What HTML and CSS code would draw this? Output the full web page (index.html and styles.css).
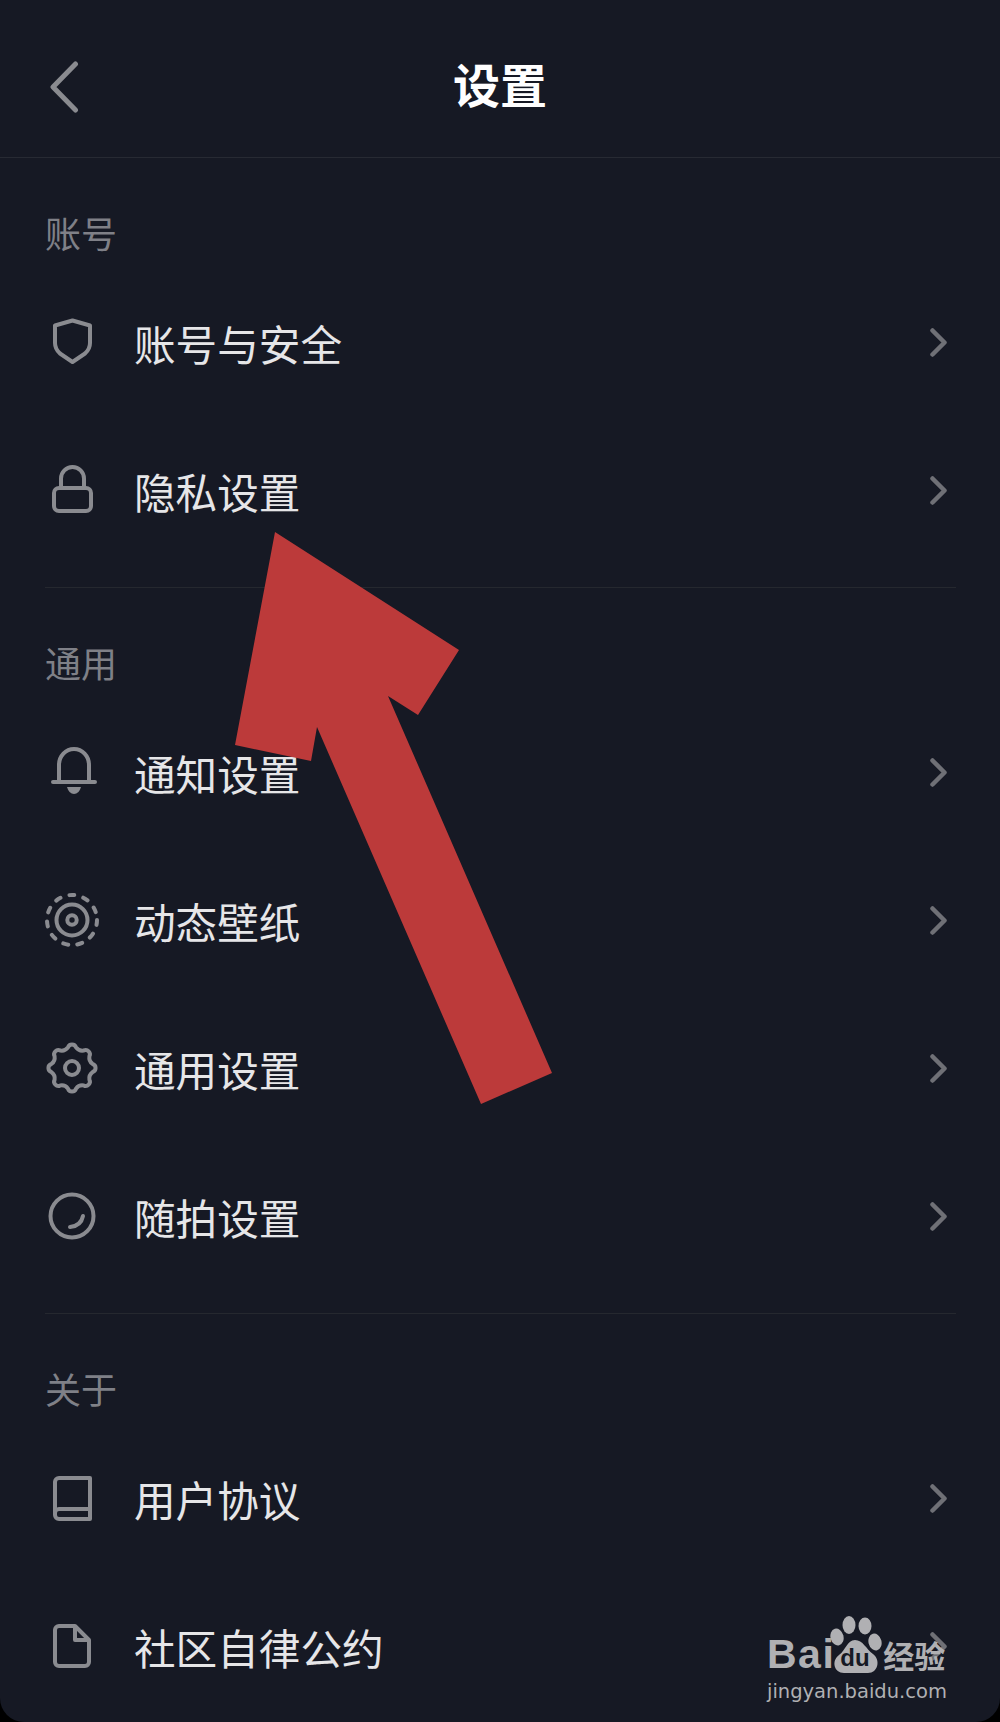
FILE: index.html
```html
<!DOCTYPE html>
<html lang="zh-CN">
<head>
<meta charset="UTF-8">
<meta name="viewport" content="width=device-width, initial-scale=1.0">
<title>设置</title>
<link rel="stylesheet" href="styles.css">
</head>
<body>

<div class="screen">

  <!-- 顶部标题栏 -->
  <header class="topbar">
    <svg class="back" viewBox="0 0 34 58"><path d="M30.500 7 8 30 30.500 53"/></svg>
    <h1 class="title">设置</h1>
    <span></span>
  </header>

  <!-- 账号 -->
  <section class="group">
    <h2 class="group-name">账号</h2>
    <div class="row">
      <svg class="icon" viewBox="0 0 54 54"><path d="M27.500 5.500 45 10.500V28q0 6-5 10.500L27.500 47 15 38.500Q10 34 10 28V10.500Z"/></svg>
      <span class="label">账号与安全</span>
      <svg class="more" viewBox="0 0 17 29"><path d="M2.500 2.500 14.500 14.500 2.500 26.500"/></svg>
    </div>
    <div class="row">
      <svg class="icon" viewBox="0 0 54 54"><rect x="9" y="25" width="37" height="23" rx="5"/><path d="M16 25V15.500a11.500 11.500 0 0 1 23 0V25"/></svg>
      <span class="label">隐私设置</span>
      <svg class="more" viewBox="0 0 17 29"><path d="M2.500 2.500 14.500 14.500 2.500 26.500"/></svg>
    </div>
  </section>

  <!-- 通用 -->
  <section class="group">
    <h2 class="group-name">通用</h2>
    <div class="row">
      <svg class="icon" viewBox="0 0 54 54"><path d="M14 37V20a15 16 0 0 1 30 0V37M8 37H50"/><path class="solid" d="M22 42H36Q34 49 29 49 24 49 22 42Z"/></svg>
      <span class="label">通知设置</span>
      <svg class="more" viewBox="0 0 17 29"><path d="M2.500 2.500 14.500 14.500 2.500 26.500"/></svg>
    </div>
    <div class="row">
      <svg class="icon" viewBox="0 0 54 54"><circle class="dashes" cx="27" cy="27" r="25"/><circle cx="27" cy="27" r="15.500"/><circle cx="27" cy="27" r="4.700"/></svg>
      <span class="label">动态壁纸</span>
      <svg class="more" viewBox="0 0 17 29"><path d="M2.500 2.500 14.500 14.500 2.500 26.500"/></svg>
    </div>
    <div class="row">
      <svg class="icon" viewBox="0 0 54 54"><path d="M47.610 31.010A4.200 4.200 0 0 0 47.610 22.990Q43.630 20.110 44.410 15.260A4.200 4.200 0 0 0 38.740 9.590Q33.890 10.370 31.010 6.390A4.200 4.200 0 0 0 22.990 6.390Q20.110 10.370 15.260 9.590A4.200 4.200 0 0 0 9.590 15.260Q10.370 20.110 6.390 22.990A4.200 4.200 0 0 0 6.390 31.010Q10.370 33.890 9.590 38.740A4.200 4.200 0 0 0 15.260 44.410Q20.110 43.630 22.990 47.610A4.200 4.200 0 0 0 31.010 47.610Q33.890 43.630 38.740 44.410A4.200 4.200 0 0 0 44.410 38.740Q43.630 33.890 47.610 31.010Z"/><circle cx="27" cy="27" r="7"/></svg>
      <span class="label">通用设置</span>
      <svg class="more" viewBox="0 0 17 29"><path d="M2.500 2.500 14.500 14.500 2.500 26.500"/></svg>
    </div>
    <div class="row">
      <svg class="icon" viewBox="0 0 54 54"><circle cx="27" cy="27" r="21.500"/><path d="M25 38Q36 37 38 27"/></svg>
      <span class="label">随拍设置</span>
      <svg class="more" viewBox="0 0 17 29"><path d="M2.500 2.500 14.500 14.500 2.500 26.500"/></svg>
    </div>
  </section>

  <!-- 关于 -->
  <section class="group last">
    <h2 class="group-name">关于</h2>
    <div class="row">
      <svg class="icon" viewBox="0 0 54 54"><path d="M14 7H45V48H14a4 4 0 0 1-4-4V11a4 4 0 0 1 4-4ZM10 42a4 4 0 0 1 4-4H45"/></svg>
      <span class="label">用户协议</span>
      <svg class="more" viewBox="0 0 17 29"><path d="M2.500 2.500 14.500 14.500 2.500 26.500"/></svg>
    </div>
    <div class="row">
      <svg class="icon" viewBox="0 0 54 54"><path d="M14 7H30L44 21V43a4 4 0 0 1-4 4H14a4 4 0 0 1-4-4V11a4 4 0 0 1 4-4ZM30 7V21H44"/></svg>
      <span class="label">社区自律公约</span>
      <svg class="more" viewBox="0 0 17 29"><path d="M2.500 2.500 14.500 14.500 2.500 26.500"/></svg>
    </div>
  </section>

  <!-- 红色箭头标注 -->
  <svg class="arrow" viewBox="0 0 1000 1722"><polygon points="275,532 459,650 418,715 388,696 552,1073 481,1104 317,727 311,761 235,745"/></svg>

  <!-- 水印 -->
  <div class="mark">
    <div class="mark-top">
      <span class="mark-bai">Bai</span>
      <span class="paw">
        <svg viewBox="0 0 52 57"><ellipse cx="7" cy="21" rx="6.500" ry="8.500" transform="rotate(-15 7 21)"/><ellipse cx="19" cy="9" rx="6.500" ry="9"/><ellipse cx="35" cy="10" rx="6.500" ry="8.500"/><ellipse cx="45" cy="26" rx="6.500" ry="8.500" transform="rotate(-15 45 26)"/><path d="M25 24C33 24 36 33 43 38 51 44 48 57 38 57H14C4 57 1 45 9 39 16 34 17 24 25 24Z"/></svg>
        <span class="paw-du">du</span>
      </span>
      <span class="mark-cn">经验</span>
    </div>
    <div class="mark-url">jingyan.baidu.com</div>
  </div>

</div>

</body>
</html>
```

FILE: styles.css
```css
/* 页面底色 */
html, body {
  margin: 0;
  background-color: #000;
}

.screen {
  position: relative;
  width: 1000px;
  height: 1722px;
  overflow: hidden;
  background-color: #161924;
  border-radius: 0 0 24px 24px;
  font-family: "Noto Sans CJK SC", "Noto Sans", sans-serif;
}

/* 标题栏 */
.topbar {
  display: grid;
  grid-template-columns: 1fr auto 1fr;
  align-items: center;
  height: 157px;
  padding: 0 45px;
  border-bottom: 1px solid #272a33;
}

.back {
  width: 34px;
  height: 58px;
  margin-top: 14px;
  fill: none;
  stroke: #8a8b90;
  stroke-width: 5;
  stroke-linecap: round;
  stroke-linejoin: round;
}

.title {
  margin: 8px 0 0;
  font-size: 47px;
  font-weight: 700;
  line-height: 60px;
  color: #fff;
}

/* 分组 */
.group {
  padding: 54px 0 23px;
  margin: 0 44px 0 45px;
  border-bottom: 1px solid #25282f;
}

.group.last {
  border-bottom: none;
}

.group-name {
  margin: 0 0 16px;
  font-size: 36px;
  font-weight: 400;
  line-height: 40px;
  color: #7f8087;
}

.row {
  display: flex;
  align-items: center;
  height: 148px;
}

.icon {
  width: 54px;
  height: 54px;
  margin-right: 35px;
  fill: none;
  stroke: #8a8b90;
  stroke-width: 4;
  stroke-linecap: round;
  stroke-linejoin: round;
}

.icon .solid {
  fill: #8a8b90;
  stroke: none;
}

.icon .dashes {
  stroke-dasharray: 5 9.300;
}

.label {
  flex: 1;
  padding-top: 2px;
  font-size: 41.600px;
  line-height: 54px;
  color: #e6e6e8;
}

.more {
  width: 17px;
  height: 29px;
  margin-right: 9px;
  fill: none;
  stroke: #6f7076;
  stroke-width: 4.500;
  stroke-linecap: round;
  stroke-linejoin: round;
}

/* 标注箭头 */
.arrow {
  position: absolute;
  top: 0;
  left: 0;
  width: 1000px;
  height: 1722px;
  fill: #bc3a3a;
}

/* 水印 */
.mark {
  position: absolute;
  left: 767px;
  top: 1616px;
  width: 180px;
  color: #b0b0b3;
}

.mark-top {
  display: flex;
  align-items: flex-end;
  height: 57px;
}

.mark-bai {
  font-family: "Liberation Sans", sans-serif;
  font-size: 41px;
  font-weight: 700;
  line-height: 38px;
  letter-spacing: 1.500px;
}

.paw {
  position: relative;
  flex: none;
  width: 52px;
  height: 57px;
  margin-left: -5px;
}

.paw svg {
  display: block;
  width: 52px;
  height: 57px;
  fill: #b0b0b3;
}

.paw-du {
  position: absolute;
  left: 10px;
  bottom: 3px;
  font-family: "Liberation Sans", sans-serif;
  font-size: 24px;
  font-weight: 700;
  line-height: 24px;
  color: #161924;
}

.mark-cn {
  margin-left: 1px;
  font-size: 31px;
  font-weight: 700;
  line-height: 36px;
  white-space: nowrap;
}

.mark-url {
  margin-top: 7px;
  font-family: "DejaVu Sans", sans-serif;
  font-size: 19.500px;
  line-height: 24px;
  white-space: nowrap;
}
```
